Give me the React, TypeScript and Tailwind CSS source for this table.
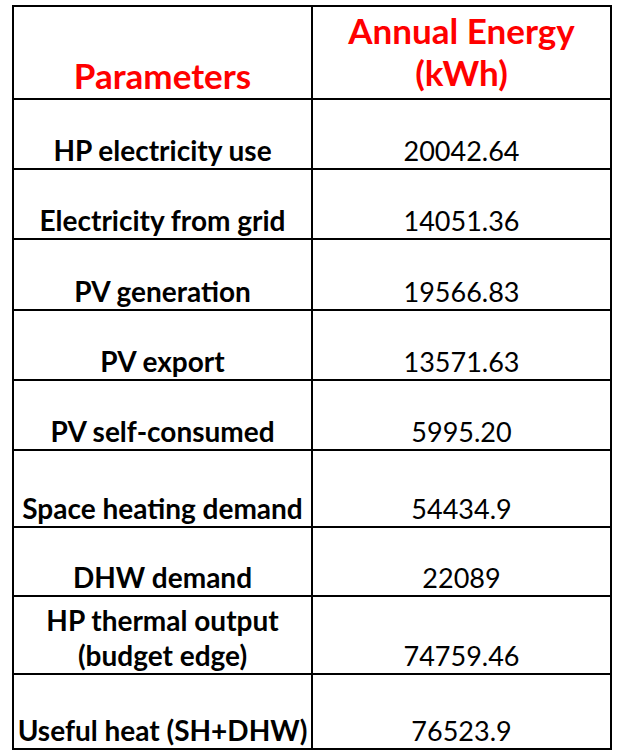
import React from 'react';

type Row = {
  label: React.ReactNode;
  value: string;
  h: string;
};

const rows: Row[] = [
  { label: 'HP electricity use', value: '20042.64', h: 'h-[70px]' },
  { label: 'Electricity from grid', value: '14051.36', h: 'h-[70px]' },
  { label: 'PV generation', value: '19566.83', h: 'h-[71px]' },
  { label: 'PV export', value: '13571.63', h: 'h-[70px]' },
  { label: 'PV self-consumed', value: '5995.20', h: 'h-[70px]' },
  { label: 'Space heating demand', value: '54434.9', h: 'h-[77px]' },
  { label: 'DHW demand', value: '22089', h: 'h-[69px]' },
  {
    label: (
      <>
        HP thermal output
        <br />
        (budget edge)
      </>
    ),
    value: '74759.46',
    h: 'h-[78px]',
  },
  { label: 'Useful heat (SH+DHW)', value: '76523.9', h: 'h-[75px]' },
];

const App: React.FC = () => {
  return (
    <div className="w-[625px] h-[754px] bg-white pl-[12px] pt-[5px] font-['Lato','Liberation_Sans',sans-serif]">
      <table className="border-collapse table-fixed w-[598px]">
        <colgroup>
          <col className="w-[299px]" />
          <col className="w-[299px]" />
        </colgroup>
        <thead>
          <tr className="h-[93px]">
            <th className="border-2 border-black align-bottom text-center pb-[2px] text-[35px] leading-[42px] font-bold text-[#ff0000]">
              Parameters
            </th>
            <th className="border-2 border-black align-bottom text-center pb-[5px] text-[35px] leading-[42px] font-bold text-[#ff0000]">
              Annual Energy
              <br />
              (kWh)
            </th>
          </tr>
        </thead>
        <tbody>
          {rows.map((r, i) => (
            <tr key={i} className={r.h}>
              <td className="border-2 border-black align-bottom text-center pb-0 text-[28px] leading-[35px] font-bold text-black">
                {r.label}
              </td>
              <td className="border-2 border-black align-bottom text-center pb-0 text-[27px] leading-[35px] text-black">
                {r.value}
              </td>
            </tr>
          ))}
        </tbody>
      </table>
    </div>
  );
};

export default App;
